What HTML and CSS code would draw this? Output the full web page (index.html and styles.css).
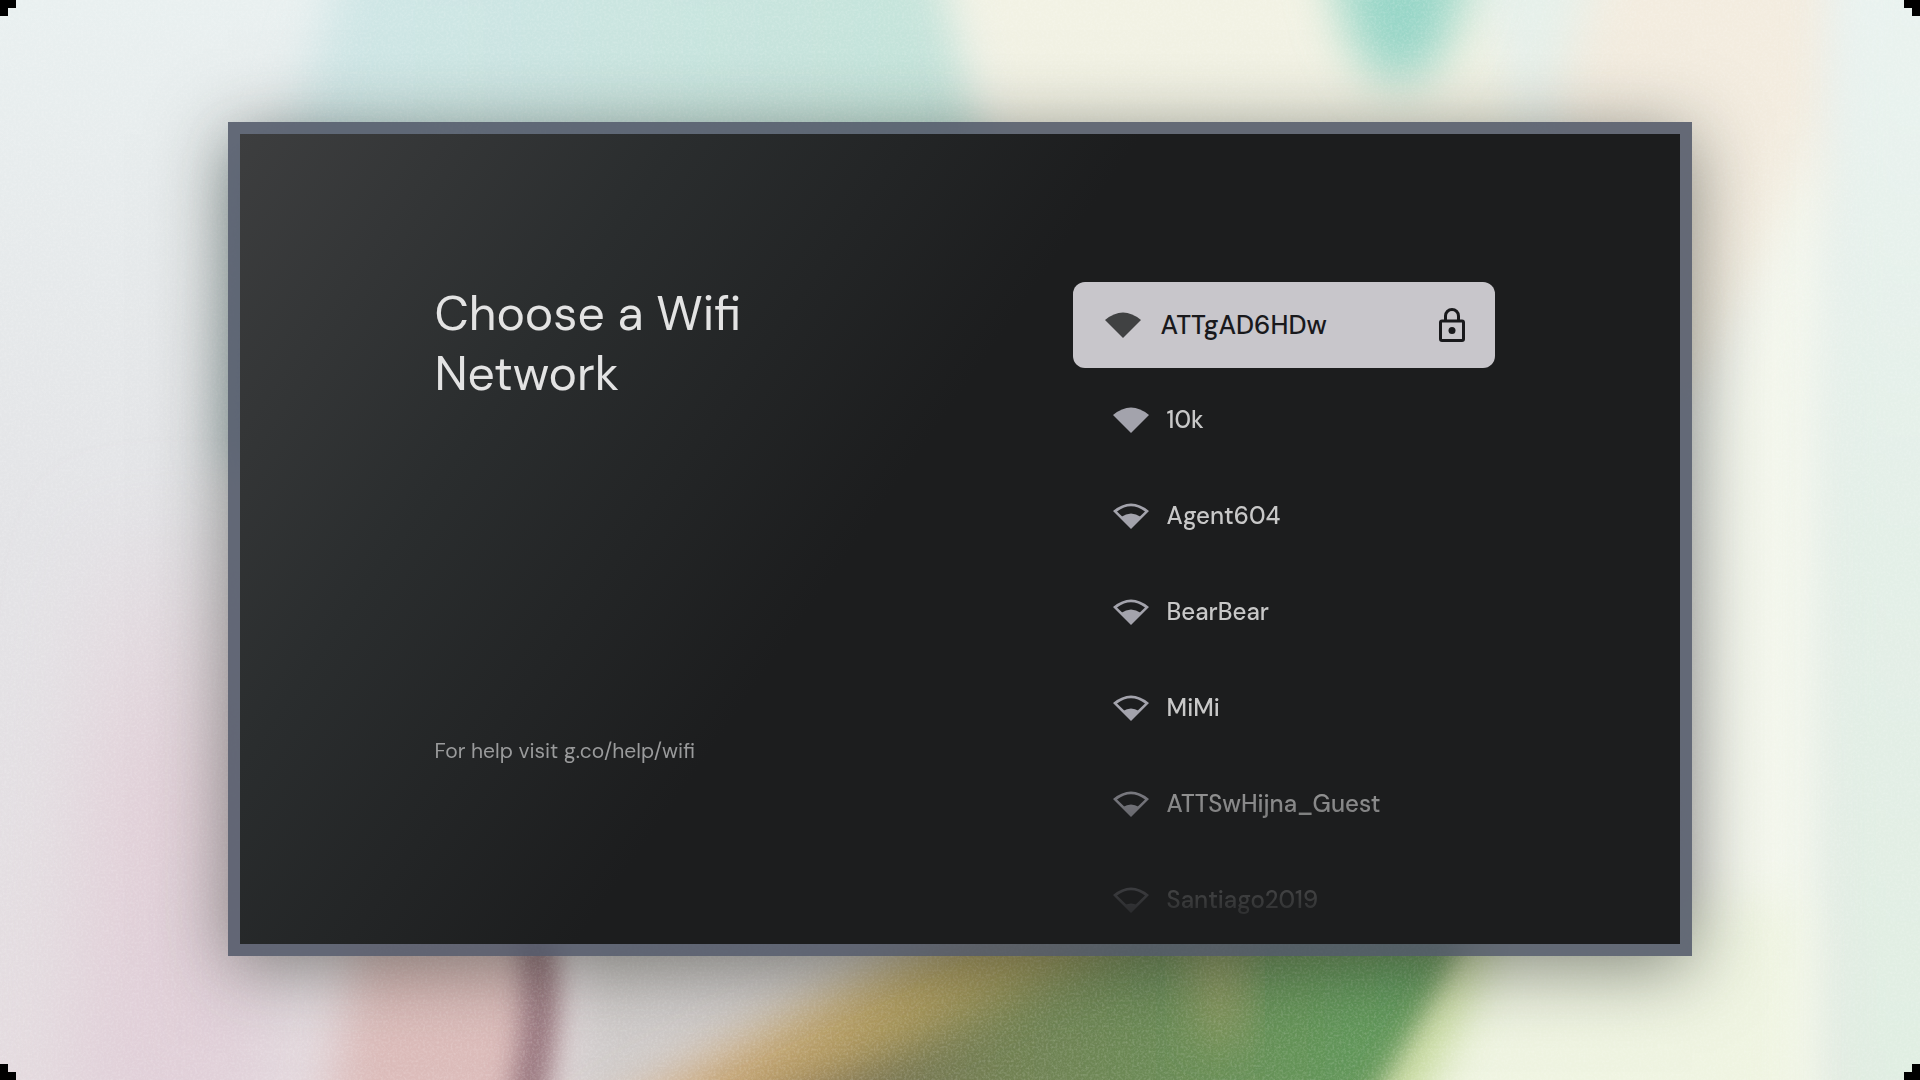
FILE: index.html
```html
<!DOCTYPE html>
<html lang="en">
<head>
<meta charset="utf-8">
<meta name="viewport" content="width=device-width, initial-scale=1">
<title>Choose a Wifi Network</title>
<link rel="stylesheet" href="styles.css">
</head>
<body>
<svg class="wallpaper" viewBox="0 0 1920 1080" preserveAspectRatio="none" aria-hidden="true">
  <defs>
    <linearGradient id="base" x1="0" y1="0" x2="0" y2="1"><stop offset="0" stop-color="#e9f0f0"/><stop offset=".5" stop-color="#e3e3e6"/><stop offset="1" stop-color="#e4dbdf"/></linearGradient>
    <linearGradient id="right" x1="0" y1="0" x2="0" y2="1"><stop offset="0" stop-color="#eaf3f0"/><stop offset=".5" stop-color="#e3efe7"/><stop offset="1" stop-color="#e0ede1"/></linearGradient>
    <linearGradient id="aqua" x1="0" y1="0" x2="1" y2="0"><stop offset="0" stop-color="#d0e6e7"/><stop offset="1" stop-color="#c3e3d9"/></linearGradient>
    <linearGradient id="pink" x1="0" y1="0" x2="0" y2="1"><stop offset="0" stop-color="#e2d1d9" stop-opacity="0"/><stop offset=".45" stop-color="#e2d1d9"/><stop offset="1" stop-color="#e0cfd8"/></linearGradient>
    <linearGradient id="leaf" gradientUnits="userSpaceOnUse" x1="800" y1="0" x2="1400" y2="0"><stop offset="0" stop-color="#7a6b52"/><stop offset=".35" stop-color="#728253"/><stop offset="1" stop-color="#609a5b"/></linearGradient>
    <linearGradient id="gold" gradientUnits="userSpaceOnUse" x1="620" y1="0" x2="1200" y2="0"><stop offset="0" stop-color="#cfa77c"/><stop offset=".5" stop-color="#b09c5c"/><stop offset="1" stop-color="#8f9453"/></linearGradient>
    <filter id="b20" x="-50%" y="-50%" width="200%" height="200%"><feGaussianBlur stdDeviation="24"/></filter>
    <filter id="b12" x="-80%" y="-50%" width="260%" height="200%"><feGaussianBlur stdDeviation="14"/></filter>
    <filter id="b40" x="-80%" y="-80%" width="260%" height="260%"><feGaussianBlur stdDeviation="40"/></filter>
    <filter id="grain" x="0" y="0" width="100%" height="100%"><feTurbulence type="fractalNoise" baseFrequency=".43" numOctaves="2" seed="4"/><feColorMatrix values="0 0 0 0 1  0 0 0 0 1  0 0 0 0 1  2 0 0 0 -.800"/></filter>
  </defs>
  <rect width="1920" height="1080" fill="url(#base)"/>
  <!-- upper petals -->
  <path d="M350-60H960L1010 200H270Z" fill="url(#aqua)" filter="url(#b20)"/>
  <path d="M240 150H400V460H225Z" fill="#b5cdd0" filter="url(#b20)"/>
  <path d="M935-60H1500L1570 200H1010Q960 60 935-60Z" fill="#f2f2e4" filter="url(#b20)"/>
  <path d="M1460-60H1660L1580 160H1540Q1510 60 1460-60Z" fill="#e6f0ea" filter="url(#b20)"/>
  <path d="M1330-50H1475Q1450 84 1395 84Q1345 70 1330-50Z" fill="#97d6c7" filter="url(#b20)"/>
  <path d="M1610-60H1840V200L1700 400H1640L1550 110Z" fill="#f3ecdf" filter="url(#b20)"/>
  <!-- right edge -->
  <path d="M1820 120L1690 420V1140H1840V300Z" fill="#f4f7ed" filter="url(#b20)"/>
  <path d="M1840-60H2000V1140H1820V400Z" fill="url(#right)" filter="url(#b20)"/>
  <!-- lower petals -->
  <path d="M90 500H270V1140H70Z" fill="url(#pink)" filter="url(#b40)"/>
  <path d="M360 930H530Q570 1010 540 1140H320Z" fill="#dcbcba" filter="url(#b20)"/>
  <path d="M515 930H550Q575 1010 540 1120H505Q535 1010 515 930Z" fill="#906c74" filter="url(#b12)"/>
  <path d="M590 920H1020L610 1120H560Z" fill="#d0cccb" filter="url(#b20)"/>
  <path d="M990 910H1500L1340 1140H570Q770 1020 990 910Z" fill="url(#gold)" filter="url(#b20)"/>
  <path d="M740 1120Q930 1040 1140 930H1485Q1440 1010 1365 1140H740Z" fill="url(#leaf)" filter="url(#b20)"/>
  <path d="M1190 930H1240V1040H1205Z" fill="#949a62" filter="url(#b20)"/>
  <path d="M1475 930H1600V1140H1350Q1420 1040 1475 930Z" fill="#bdd48d" filter="url(#b12)"/>
  <path d="M1500 900H1800V1140H1390Q1460 1030 1500 900Z" fill="#eff4e1" filter="url(#b20)"/>
  <rect width="1920" height="1080" filter="url(#grain)" opacity=".18"/>
  <!-- stepped screen corners -->
  <path d="M0 0H16V8H8V16H0ZM1920 0V16H1912V8H1904V0ZM0 1080V1064H8V1072H16V1080ZM1920 1080H1904V1072H1912V1064H1920Z" fill="#000"/>
</svg>
<svg class="symbols" aria-hidden="true">
  <symbol id="wifi-full" viewBox="0 0 36 26"><path d="M0 8Q18-7 36 8L18 26Z"/></symbol>
  <symbol id="wifi-outline" viewBox="0 0 36 26"><path fill-rule="evenodd" d="M0 8Q18-7 36 8L18 26ZM4 8.500L18 22L32 8.500Q18-2 4 8.500Z"/></symbol>
  <symbol id="wifi-3" viewBox="0 0 36 26"><use href="#wifi-outline"/><path d="M8 14Q18 7 28 14L18 25Z"/></symbol>
  <symbol id="wifi-2" viewBox="0 0 36 26"><use href="#wifi-outline"/><path d="M10 16Q18 11 26 16L18 25Z"/></symbol>
  <symbol id="wifi-1" viewBox="0 0 36 26"><use href="#wifi-outline"/><path d="M12 18Q18 15 24 18L18 25Z"/></symbol>
</svg>
<main class="stage">
  <section class="panel">
    <div class="intro">
      <h1 class="title">Choose a Wifi Network</h1>
      <p class="help">For help visit <a class="help-link" href="https://g.co/help/wifi">g.co/help/wifi</a></p>
    </div>
    <ul class="networks">
      <li><button class="network selected" type="button"><svg class="wifi"><use href="#wifi-full"/></svg><span class="name">ATTgAD6HDw</span><svg class="lock" viewBox="0 0 26 34" role="img" aria-label="Secured"><path d="M3 13H23Q24.500 13 24.500 14.500V31Q24.500 32.500 23 32.500H3Q1.500 32.500 1.500 31V14.500Q1.500 13 3 13ZM6.500 13V8A6.500 6.500 0 0 1 19.500 8V13" fill="none" stroke="currentColor" stroke-width="3"/><circle cx="13" cy="22.500" r="3.500" fill="currentColor"/></svg></button></li>
      <li><button class="network" type="button"><svg class="wifi"><use href="#wifi-full"/></svg><span class="name">10k</span></button></li>
      <li><button class="network" type="button"><svg class="wifi"><use href="#wifi-3"/></svg><span class="name">Agent604</span></button></li>
      <li><button class="network" type="button"><svg class="wifi"><use href="#wifi-3"/></svg><span class="name">BearBear</span></button></li>
      <li><button class="network" type="button"><svg class="wifi"><use href="#wifi-2"/></svg><span class="name">MiMi</span></button></li>
      <li><button class="network" type="button"><svg class="wifi"><use href="#wifi-2"/></svg><span class="name">ATTSwHijna_Guest</span></button></li>
      <li><button class="network" type="button"><svg class="wifi"><use href="#wifi-1"/></svg><span class="name">Santiago2019</span></button></li>
    </ul>
  </section>
</main>
</body>
</html>
```
FILE: styles.css
```css
* { box-sizing: border-box; }

body {
  margin: 0;
  font-family: "DM Sans", Inter, "Liberation Sans", sans-serif;
  font-optical-sizing: none;
  background: #e9f0ee;
}

.wallpaper {
  position: fixed;
  inset: 0;
  width: 100%;
  height: 100%;
}

.symbols {
  position: absolute;
  width: 0;
  height: 0;
}

.stage {
  position: relative;
  display: grid;
  align-content: center;
  min-height: 100vh;
  padding: 24px calc(12% - 2px) 26px;
}

.panel {
  display: flex;
  justify-content: space-between;
  padding: 148px 185px 0 194px;
  border: 12px solid rgba(80, 87, 102, 0.88);
  background: linear-gradient(125deg, #3d3e3f 0%, #2a2d2e 22%, #1c1d1e 45%, #1c1d1e 100%) padding-box;
  box-shadow: 0 12px 70px 0 rgba(40, 44, 36, 0.55);
}

.intro {
  display: flex;
  flex-direction: column;
  justify-content: space-between;
  width: 340px;
  padding: 2px 0 178px;
}

.title {
  margin: 0;
  color: #e3e3e3;
  font-size: 48px;
  font-weight: 400;
  line-height: 60px;
}

.help {
  margin: 0;
  color: #9a9b9c;
  font-size: 21px;
  line-height: 30px;
}

.help-link {
  color: inherit;
  text-decoration: none;
}

.networks {
  display: flex;
  flex-direction: column;
  gap: 48px;
  width: 422px;
  margin: 0;
  padding: 0 0 20px;
  list-style: none;
  mask-image: linear-gradient(#000 67%, transparent 99%);
}

.network {
  display: flex;
  align-items: center;
  gap: 18px;
  width: 100%;
  height: 48px;
  padding: 0 40px;
  border: 0;
  background: none;
  color: #c8c8c8;
  font: 500 24px/48px "DM Sans", Inter, "Liberation Sans", sans-serif;
  font-optical-sizing: none;
  text-align: left;
}

.network.selected {
  gap: 20px;
  height: 86px;
  margin-bottom: -20px;
  padding: 0 30px 0 32px;
  border-radius: 12px;
  background: #c8c6cb;
  color: #19191c;
  font-size: 26px;
}

.wifi {
  width: 36px;
  height: 26px;
  fill: #a3a3ac;
}

.selected .wifi { fill: #404142; }

.name { flex: 1; }

.lock {
  width: 26px;
  height: 34px;
}
```
